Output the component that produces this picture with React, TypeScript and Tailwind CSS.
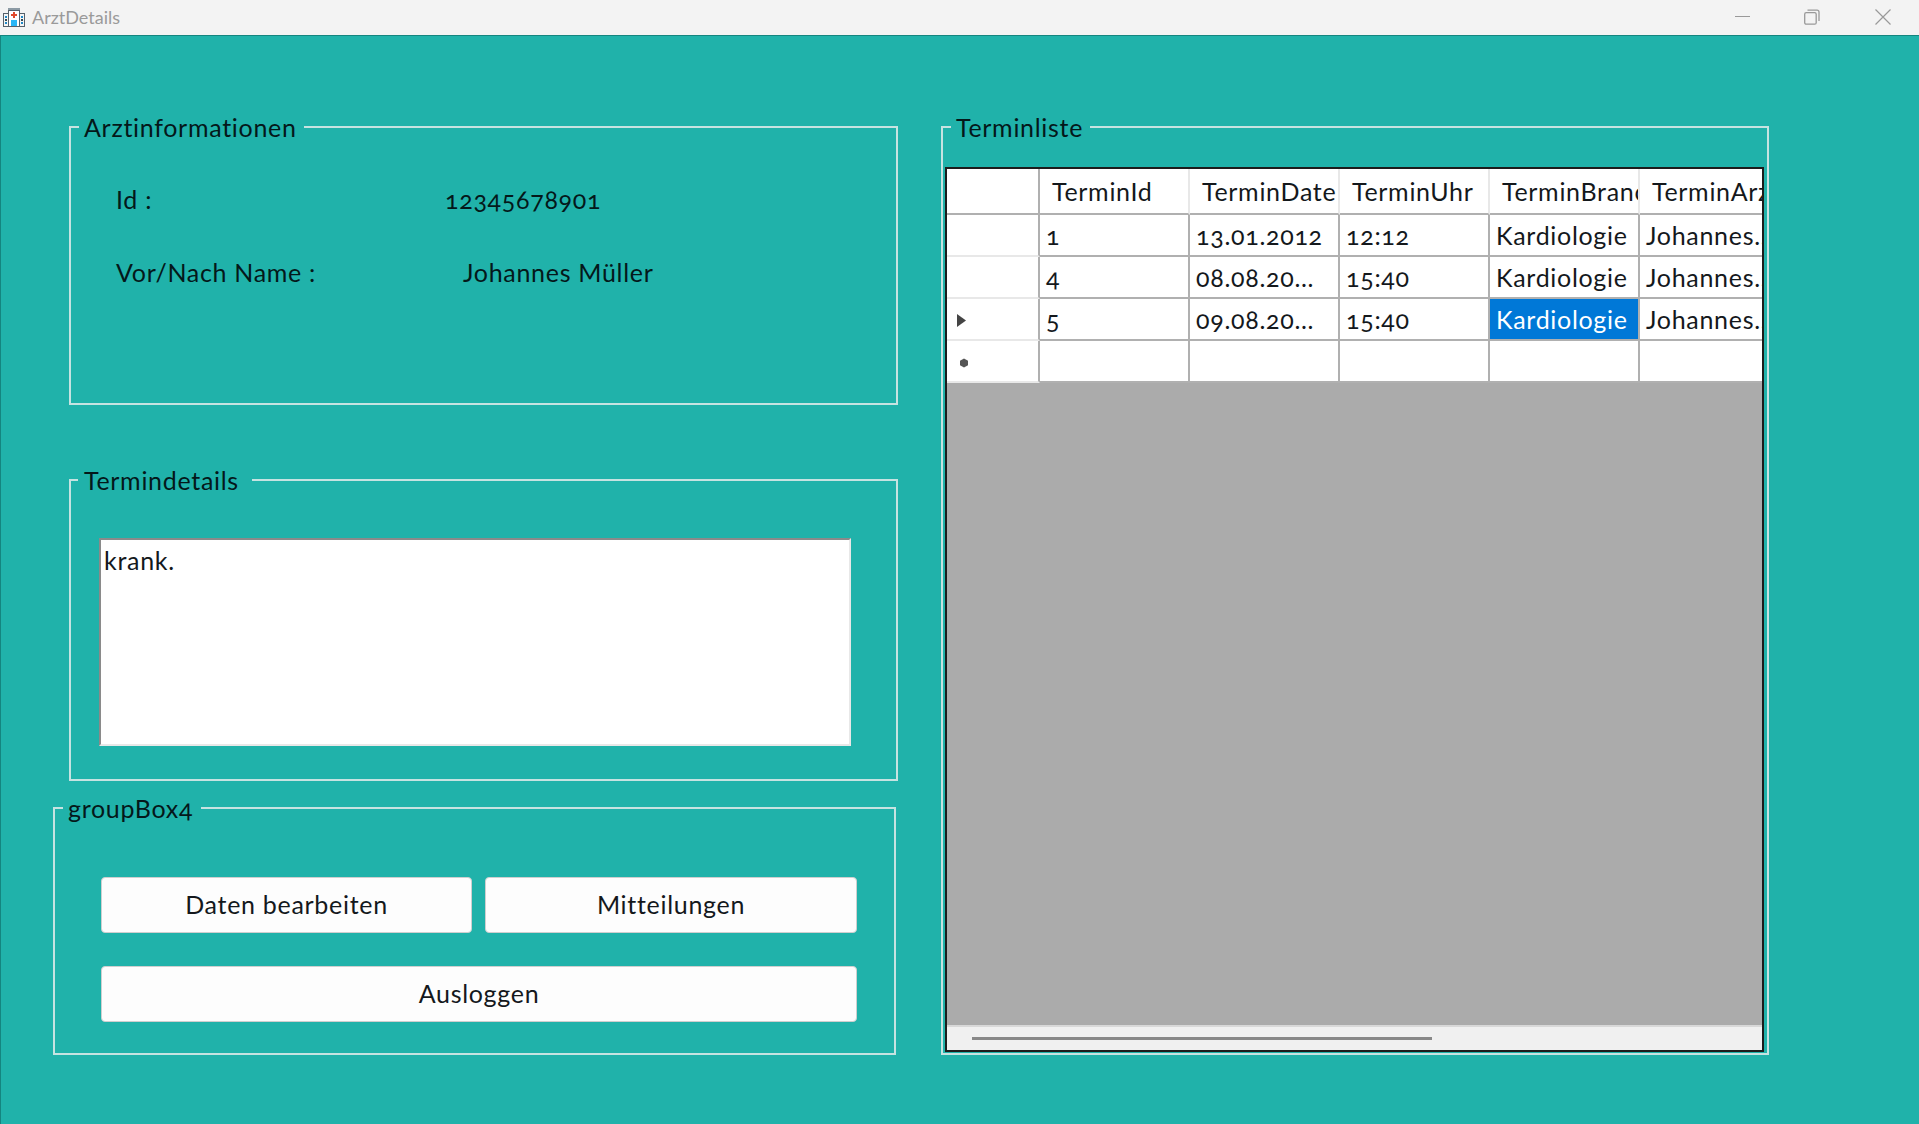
const rows = [
  { marker: "", id: "1", date: "13.01.2012", time: "12:12", selected: false },
  { marker: "", id: "4", date: "08.08.20...", time: "15:40", selected: false },
  { marker: "current", id: "5", date: "09.08.20...", time: "15:40", selected: true },
];

const headers = ["TerminId", "TerminDate", "TerminUhr", "TerminBranche", "TerminArzt"];

function GroupBox({
  title,
  titleClass,
  className,
  children,
}: {
  title: string;
  titleClass: string;
  className: string;
  children: React.ReactNode;
}) {
  return (
    <div className={`relative border-2 border-[#c6e3e1] ${className}`}>
      <div className={`absolute top-[-16px] h-[30px] bg-[#20b2aa] text-[25px] leading-[30px] text-[#04181a] whitespace-nowrap ${titleClass}`}>
        {title}
      </div>
      {children}
    </div>
  );
}

function HospitalIcon() {
  return (
    <svg width="22" height="21" viewBox="0 0 22 21" className="shrink-0">
      <rect x="0.5" y="6.5" width="21" height="13" fill="#f4f4f4" stroke="#55606a" />
      <rect x="5" y="1" width="12" height="2" fill="#8c9aa4" />
      <rect x="5.5" y="3.5" width="11" height="16" fill="#fff" stroke="#55606a" />
      <rect x="10" y="5" width="2" height="6" fill="#e0492c" />
      <rect x="8" y="7" width="6" height="2" fill="#e0492c" />
      <rect x="8" y="13" width="6" height="6" fill="#29b6f6" />
      <rect x="2" y="9" width="2" height="2" fill="#1e88c7" />
      <rect x="2" y="12" width="2" height="2" fill="#37474f" />
      <rect x="2" y="15" width="2" height="2" fill="#1e88c7" />
      <rect x="18" y="9" width="2" height="2" fill="#1e88c7" />
      <rect x="18" y="12" width="2" height="2" fill="#37474f" />
      <rect x="18" y="15" width="2" height="2" fill="#1e88c7" />
    </svg>
  );
}

function TitleBar() {
  return (
    <div className="flex h-[36px] shrink-0 items-center border-b border-[#14857f] bg-[#f3f3f3] pl-[3px] tracking-normal">
      <HospitalIcon />
      <span className="ml-[7px] text-[18px] text-[#9a9a9a]">ArztDetails</span>
      <div className="ml-auto flex items-center pb-[1px] pr-[28px]">
        <svg width="15" height="16" viewBox="0 0 15 16" stroke="#999" fill="none">
          <path d="M0 7.5H15" />
        </svg>
        <svg width="16" height="16" viewBox="0 0 16 16" stroke="#999" fill="none" strokeWidth="1.3" className="ml-[54px]">
          <rect x="0.7" y="3.7" width="11.5" height="11.5" rx="1.5" />
          <path d="M3.5 1.2H13a2 2 0 0 1 2 2V12" />
        </svg>
        <svg width="16" height="16" viewBox="0 0 16 16" stroke="#999" fill="none" strokeWidth="1.2" className="ml-[55px]">
          <path d="M0.5 0.5L15.5 15.5M15.5 0.5L0.5 15.5" />
        </svg>
      </div>
    </div>
  );
}

function Cell({ children, selected }: { children?: React.ReactNode; selected?: boolean }) {
  return (
    <div
      className={`h-full w-[150px] shrink-0 overflow-hidden whitespace-nowrap border-r-2 border-b-2 border-[#b0b0b0] pl-[6px] leading-[40px] ${
        selected ? "bg-[#0078d7] text-white" : "bg-white"
      }`}
    >
      {children}
    </div>
  );
}

function RowHeader({ children }: { children?: React.ReactNode }) {
  return (
    <div className="flex h-full w-[93px] shrink-0 items-center border-r-2 border-b-2 border-r-[#b0b0b0] border-b-[#e8e8e8] bg-white pl-[10px]">
      {children}
    </div>
  );
}

function DataGrid() {
  return (
    <div className="ml-[2px] mt-[39px] flex h-[885px] w-[819px] flex-col overflow-hidden border-2 border-[#1c1c1c] bg-[#ababab] text-[25px] text-[#14181c]">
      <div className="flex h-[46px] shrink-0">
        <div className="h-full w-[93px] shrink-0 border-r-2 border-b-2 border-r-[#b0b0b0] border-b-[#b0b0b0] bg-white" />
        {headers.map((h) => (
          <div
            key={h}
            className="h-full w-[150px] shrink-0 overflow-hidden whitespace-nowrap border-r-2 border-b-2 border-r-[#e8e8e8] border-b-[#b0b0b0] bg-white pl-[12px] leading-[45px]"
          >
            {h}
          </div>
        ))}
      </div>

      {rows.map((r) => (
        <div key={r.id} className="flex h-[42px] shrink-0">
          <RowHeader>
            {r.marker === "current" ? (
              <svg width="9" height="13" viewBox="0 0 9 13" className="mt-[2px]">
                <path d="M0 0L9 6.5L0 13Z" fill="#444" />
              </svg>
            ) : null}
          </RowHeader>
          <Cell>{r.id}</Cell>
          <Cell>{r.date}</Cell>
          <Cell>{r.time}</Cell>
          <Cell selected={r.selected}>Kardiologie</Cell>
          <Cell>Johannes...</Cell>
        </div>
      ))}

      <div className="flex h-[42px] shrink-0">
        <RowHeader>
          <svg width="10" height="10" viewBox="0 0 10 10" className="ml-[2px] mt-[4px]">
            <path d="M5 0.5L9 2.8V7.2L5 9.5L1 7.2V2.8Z" fill="#555" />
          </svg>
        </RowHeader>
        <Cell />
        <Cell />
        <Cell />
        <Cell />
        <Cell />
      </div>

      <div className="flex-1" />

      <div className="flex h-[25px] shrink-0 items-center border-t-2 border-[#d8d8d8] bg-[#f0f0f0] pl-[25px]">
        <div className="h-[3px] w-[460px] bg-[#888888]" />
      </div>
    </div>
  );
}

export default function App() {
  return (
    <div className="flex h-[1124px] w-full flex-col overflow-hidden bg-[#20b2aa] font-[Lato,sans-serif] tracking-[0.7px] text-black oldstyle-nums">
      <TitleBar />
      <div className="flex flex-1 border-l border-[#14857f]">
        <div className="flex w-[897px] shrink-0 flex-col pl-[52px] pt-[90px]">
          <GroupBox title="Arztinformationen" titleClass="left-[8px] pl-[5px] pr-[7px]" className="ml-[16px] h-[279px] w-[829px] shrink-0">
            <div className="pl-[45px] pt-[56px] text-[25px] leading-[30px] text-[#04181a]">
              <div className="flex">
                <span className="w-[329px]">Id :</span>
                <span>12345678901</span>
              </div>
              <div className="mt-[43px] flex">
                <span className="w-[347px]">Vor/Nach Name :</span>
                <span>Johannes Müller</span>
              </div>
            </div>
          </GroupBox>

          <GroupBox title="Termindetails" titleClass="left-[7px] pl-[6px] pr-[13px]" className="ml-[16px] mt-[74px] h-[302px] w-[829px] shrink-0">
            <div className="ml-[28px] mt-[57px] h-[208px] w-[752px] border-2 border-t-[#8a8a8a] border-l-[#8a8a8a] border-r-[#e8e8e8] border-b-[#e8e8e8] bg-white pl-[3px] text-[25px] leading-[40px] text-[#14181c]">
              krank.
            </div>
          </GroupBox>

          <GroupBox title="groupBox4" titleClass="left-[8px] pl-[5px] pr-[8px]" className="mt-[26px] h-[248px] w-[843px] shrink-0">
            <div className="pl-[46px] pt-[68px] text-[25px] text-[#14181c]">
              <div className="flex gap-[13px]">
                <button className="h-[56px] w-[371px] rounded-[4px] border border-[#cfcfcf] bg-[#fdfdfd]">Daten bearbeiten</button>
                <button className="h-[56px] w-[372px] rounded-[4px] border border-[#cfcfcf] bg-[#fdfdfd]">Mitteilungen</button>
              </div>
              <button className="mt-[33px] h-[56px] w-[756px] rounded-[4px] border border-[#cfcfcf] bg-[#fdfdfd]">Ausloggen</button>
            </div>
          </GroupBox>
        </div>

        <div className="ml-[43px] pt-[90px]">
          <GroupBox title="Terminliste" titleClass="left-[8px] pl-[5px] pr-[7px]" className="h-[929px] w-[828px]">
            <DataGrid />
          </GroupBox>
        </div>
      </div>
    </div>
  );
}
